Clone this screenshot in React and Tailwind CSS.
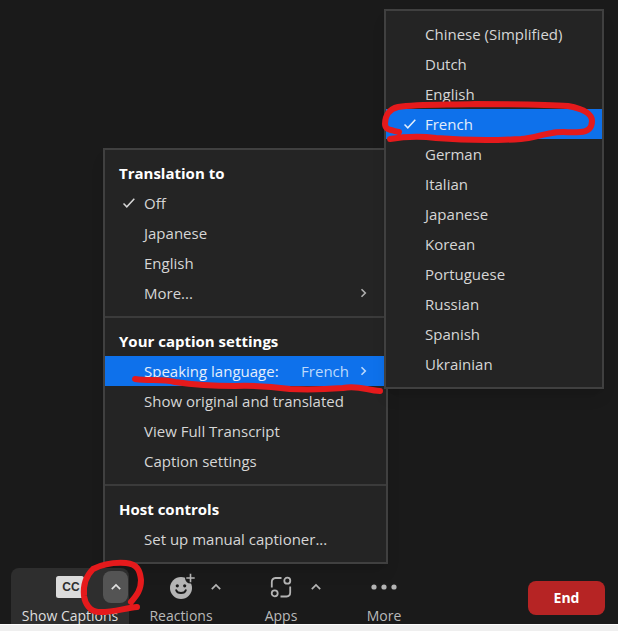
import React, { useState } from 'react';

const languages = [
  'Chinese (Simplified)',
  'Dutch',
  'English',
  'French',
  'German',
  'Italian',
  'Japanese',
  'Korean',
  'Portuguese',
  'Russian',
  'Spanish',
  'Ukrainian',
];

function Check() {
  return (
    <svg className="h-3 w-3" viewBox="0 0 12 12" fill="none" stroke="currentColor" strokeWidth="1.5">
      <path d="M0.5 6.5 L3.8 9.8 L11.3 1.8" />
    </svg>
  );
}

function ChevronRight() {
  return (
    <svg className="h-3 w-3" viewBox="0 0 12 12" fill="none" stroke="currentColor" strokeWidth="1.6">
      <path d="M4.5 2.2 L8.3 6 L4.5 9.8" />
    </svg>
  );
}

function ChevronUp() {
  return (
    <svg className="h-3 w-3" viewBox="0 0 12 12" fill="none" stroke="currentColor" strokeWidth="1.7">
      <path d="M1.8 8.2 L6 4 L10.2 8.2" />
    </svg>
  );
}

function CCIcon() {
  return (
    <svg className="h-6 w-8" viewBox="0 0 32 24">
      <rect x="2" y="1" width="28" height="22" rx="2.5" fill="#dcdcdc" />
      <text x="17" y="16" textAnchor="middle" fontSize="12" fontWeight="700" fill="#2e2e2e" fontFamily="Liberation Sans, sans-serif">
        CC
      </text>
    </svg>
  );
}

function ReactionsIcon() {
  return (
    <svg className="h-7 w-8" viewBox="0 0 32 28" fill="none">
      <circle cx="16" cy="15" r="11" fill="#b4b4b4" />
      <circle cx="25.5" cy="5" r="5.5" fill="#1a1a1a" />
      <path d="M25.5 0.8 V9.2 M21.3 5 H29.7" stroke="#b4b4b4" strokeWidth="1.6" />
      <circle cx="12.3" cy="12.8" r="1.6" fill="#1a1a1a" />
      <circle cx="19.7" cy="12.8" r="1.6" fill="#1a1a1a" />
      <path d="M11.2 17.2 C12.3 21 19.7 21 20.8 17.2" stroke="#1a1a1a" strokeWidth="1.9" strokeLinecap="round" />
    </svg>
  );
}

function AppsIcon() {
  return (
    <svg className="h-6 w-6" viewBox="0 0 24 24" fill="none" stroke="#b4b4b4" strokeWidth="1.8">
      <path d="M12.5 3 H6.5 A4 4 0 0 0 2.8 7 V12.5" />
      <path d="M11.5 21.5 H17.5 A4 4 0 0 0 21.2 17.5 V11.5" />
      <circle cx="18.3" cy="5.7" r="3" />
      <circle cx="5.7" cy="18.3" r="3" />
    </svg>
  );
}

function DotsIcon() {
  return (
    <svg className="h-6 w-7" viewBox="0 0 28 24" fill="#b4b4b4">
      <circle cx="4" cy="12" r="2.6" />
      <circle cx="14" cy="12" r="2.6" />
      <circle cx="24" cy="12" r="2.6" />
    </svg>
  );
}

function MenuHeading({ children }) {
  return <h2 className="px-3.5 leading-[30px] font-bold text-white">{children}</h2>;
}

function MenuItem({ children, checked, value, arrow, active }) {
  return (
    <button
      type="button"
      className={
        active
          ? 'flex h-[30px] w-full items-center bg-[#0e71eb] pr-[17px] pl-[18px] text-left text-[#e4eefb]'
          : 'flex h-[30px] w-full items-center pr-[17px] pl-[18px] text-left text-[#d6d6d6]'
      }
    >
      <span className="w-[21px] shrink-0">{checked && <Check />}</span>
      <span className="grow">{children}</span>
      {value && <span className="mr-2 text-[#bcd9fb]">{value}</span>}
      {arrow && (
        <span className={value ? 'text-[#bcd9fb]' : 'text-[#b0b0b0]'}>
          <ChevronRight />
        </span>
      )}
    </button>
  );
}

function CaptionMenu() {
  return (
    <div className="absolute bottom-full left-[103px] mb-1 w-[285px] divide-y-2 divide-[#3b3b3b] border-2 border-[#404040] bg-[#242424] shadow-lg">
      <section className="py-2">
        <MenuHeading>Translation to</MenuHeading>
        <MenuItem checked>Off</MenuItem>
        <MenuItem>Japanese</MenuItem>
        <MenuItem>English</MenuItem>
        <MenuItem arrow>More...</MenuItem>
      </section>
      <section className="py-2">
        <MenuHeading>Your caption settings</MenuHeading>
        <MenuItem value="French" arrow active>Speaking language:</MenuItem>
        <MenuItem>Show original and translated</MenuItem>
        <MenuItem>View Full Transcript</MenuItem>
        <MenuItem>Caption settings</MenuItem>
      </section>
      <section className="py-2">
        <MenuHeading>Host controls</MenuHeading>
        <MenuItem>Set up manual captioner...</MenuItem>
      </section>
    </div>
  );
}

function LanguageMenu() {
  const [selected, setSelected] = useState('French');

  return (
    <ul className="absolute top-[9px] left-[384px] w-[220px] border-2 border-[#404040] bg-[#242424] py-2 shadow-lg">
      {languages.map((lang) => (
        <li key={lang}>
          <button
            type="button"
            onClick={() => setSelected(lang)}
            className={
              lang === selected
                ? 'flex h-[30px] w-full items-center bg-[#0e71eb] pl-[18px] text-left text-[#e4eefb]'
                : 'flex h-[30px] w-full items-center pl-[18px] text-left text-[#d6d6d6]'
            }
          >
            <span className="w-[21px] shrink-0">{lang === selected && <Check />}</span>
            {lang}
          </button>
        </li>
      ))}
    </ul>
  );
}

function ToolbarItem({ label, icon, className, caret, open }) {
  return (
    <div className={'relative h-full shrink-0 ' + className}>
      <button type="button" className="flex w-full flex-col items-center whitespace-nowrap">
        <span className="flex h-[38px] items-center">{icon}</span>
        <span className="leading-5 font-medium">{label}</span>
      </button>
      {caret && (
        <button
          type="button"
          aria-label={label + ' options'}
          className={
            open
              ? 'absolute top-[3px] right-[1px] flex h-8 w-[25px] items-center justify-center rounded-lg bg-[#545454] text-[#e0e0e0]'
              : 'absolute top-[3px] right-[1px] flex h-8 w-[25px] items-center justify-center rounded-lg text-[#b4b4b4]'
          }
        >
          <ChevronUp />
        </button>
      )}
    </div>
  );
}

// red pen marks drawn over the screen
function Marker() {
  return (
    <svg
      className="pointer-events-none absolute top-0 left-0 h-[631px] w-[618px]"
      viewBox="0 0 618 631"
      fill="none"
      stroke="#e51a1c"
      strokeWidth="6"
      strokeLinecap="round"
      strokeLinejoin="round"
    >
      <path d="M399 132 C391 130 385 130 385 124 C385 116 389 109 398 107 C418 104 446 105 475 104 C510 104 545 104 568 106 C584 109 592 114 592 121 C592 128 588 132 580 132 C570 133 561 131 552 133 C540 135 532 138 521 139 C490 141 460 140 436 138 C420 136 402 137 390 139" />
      <path d="M135 379 C150 381 162 379 175 382 C195 385 215 386 235 386 C258 385 274 387 290 389 C308 390 330 389 343 388 C358 385 366 390 380 391" />
      <path d="M131 602 C137 595 141 590 141 580 C140 570 137 564 126 563 C112 562 101 565 93 569 C85 577 83 586 84 596 C85 604 90 611 98 612 C111 613 125 608 137 607" />
    </svg>
  );
}

export default function App() {
  return (
    <main className="relative flex min-h-screen flex-col overflow-hidden bg-[#1a1a1a] font-['Open_Sans','Noto_Sans',sans-serif] text-[15px]">
      <div className="grow" />
      <footer className="relative flex h-14 gap-1 pl-[11px] text-[#b9b9b9]">
        <CaptionMenu />
        <div className="flex grow gap-1 overflow-hidden text-sm">
          <ToolbarItem label="Show Captions" icon={<CCIcon />} className="w-[118px] rounded-t-lg bg-[#2e2e2e] text-[#dedede]" caret open />
          <ToolbarItem label="Reactions" icon={<ReactionsIcon />} className="w-24" caret />
          <ToolbarItem label="Apps" icon={<AppsIcon />} className="w-24" caret />
          <ToolbarItem label="More" icon={<DotsIcon />} className="w-[102px]" />
        </div>
        <button type="button" className="mt-[13px] mr-[13px] h-[34px] w-[77px] shrink-0 rounded-lg bg-[#b62424] text-sm font-bold text-white">
          End
        </button>
      </footer>
      <div className="h-[7px] border-t border-white bg-[#efefef]" />
      <LanguageMenu />
      <Marker />
    </main>
  );
}
